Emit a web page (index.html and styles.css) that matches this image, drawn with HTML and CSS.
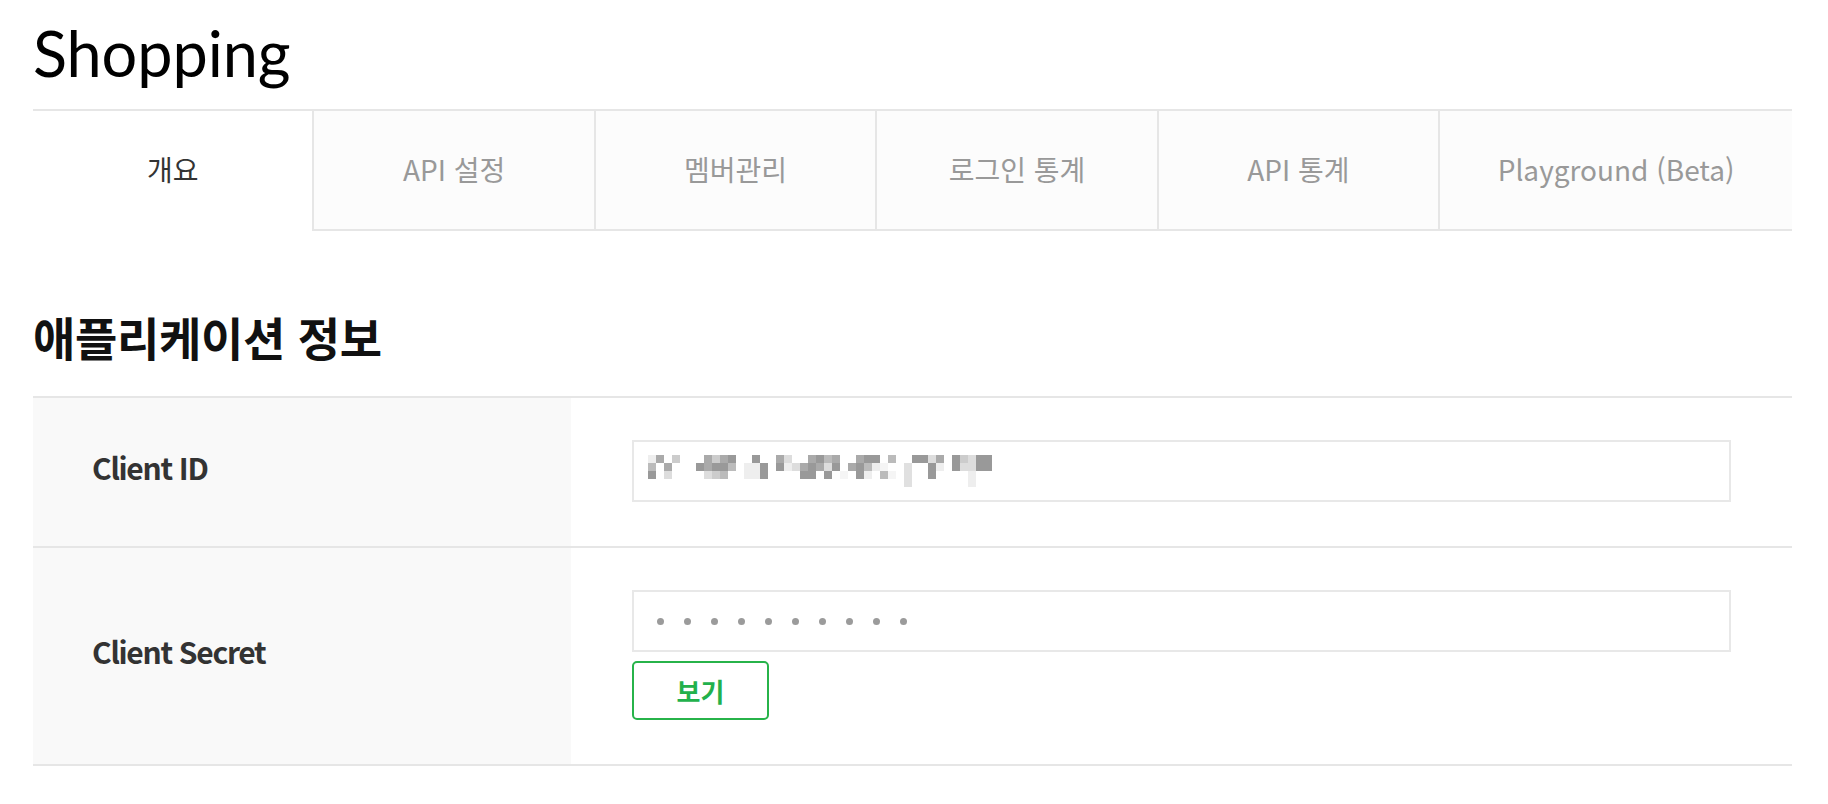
FILE: index.html
```html
<!DOCTYPE html>
<html lang="ko">
<head>
<meta charset="utf-8">
<title>Shopping</title>
<link rel="stylesheet" href="styles.css">
</head>
<body>
<div class="page">
  <h1 class="title">Shopping</h1>
  <ul class="tabs">
    <li class="tab active">개요</li>
    <li class="tab">API 설정</li>
    <li class="tab">멤버관리</li>
    <li class="tab">로그인 통계</li>
    <li class="tab">API 통계</li>
    <li class="tab">Playground (Beta)</li>
  </ul>
  <h2 class="section-title">애플리케이션 정보</h2>
  <div class="info">
    <div class="row">
      <div class="label">Client ID</div>
      <div class="value">
        <div class="field">
          <svg class="mosaic" width="344" height="32" viewBox="0 0 43 4" shape-rendering="crispEdges" aria-hidden="true">
            <path fill="#999" d="M10 0h1v1h-1zM13 0h1v1h-1zM21 0h1v1h-1zM27 0h2v1h-2zM33 0h2v1h-2zM38 0h1v1h-1zM41 0h2v1h-2zM6 1h1v1h-1zM8 1h2v1h-2zM14 1h1v1h-1zM16 1h1v1h-1zM20 1h1v1h-1zM23 1h1v1h-1zM26 1h1v1h-1zM35 1h1v1h-1zM38 1h1v1h-1zM41 1h2v1h-2zM0 2h1v1h-1zM14 2h1v1h-1zM19 2h2v1h-2zM22 2h1v1h-1zM26 2h1v1h-1zM35 2h1v1h-1z"/>
            <path fill="#aaa" d="M1 0h1v1h-1zM7 0h1v1h-1zM9 0h1v1h-1zM16 0h1v1h-1zM20 0h1v1h-1zM23 0h1v1h-1zM26 0h1v1h-1zM36 0h1v1h-1zM2 1h1v1h-1zM7 1h1v1h-1zM19 1h1v1h-1zM21 1h1v1h-1zM25 1h1v1h-1z"/>
            <path fill="#bbb" d="M22 0h1v1h-1zM30 0h1v1h-1zM0 1h1v1h-1zM10 1h1v1h-1zM27 1h1v1h-1zM9 2h1v1h-1zM29 2h1v1h-1z"/>
            <path fill="#ccc" d="M3 0h1v1h-1zM8 0h1v1h-1zM39 0h1v1h-1zM8 2h1v1h-1z"/>
            <path fill="#ddd" d="M17 0h1v1h-1zM35 0h1v1h-1zM40 0h1v1h-1zM18 1h1v1h-1zM22 1h1v1h-1zM39 1h2v1h-2zM2 2h1v1h-1zM7 2h1v1h-1z"/>
            <path fill="#eee" d="M0 0h1v1h-1zM12 1h2v1h-2zM17 1h1v1h-1zM28 1h1v1h-1zM36 1h1v1h-1zM12 2h2v1h-2zM27 2h1v1h-1zM40 2h1v2h-1z"/>
            <path fill="#f5f5f5" d="M29 1h1v1h-1zM24 2h1v1h-1zM30 2h1v1h-1z"/>
            <path fill="#e0e0e0" d="M32 1h1v3h-1z"/>
          </svg>
        </div>
      </div>
    </div>
    <div class="row">
      <div class="label">Client Secret</div>
      <div class="value">
        <div class="field secret">
          <span class="dot"></span><span class="dot"></span><span class="dot"></span><span class="dot"></span><span class="dot"></span><span class="dot"></span><span class="dot"></span><span class="dot"></span><span class="dot"></span><span class="dot"></span>
        </div>
        <button class="btn" type="button">보기</button>
      </div>
    </div>
  </div>
</div>
</body>
</html>
```

FILE: styles.css
```css
html, body {
  margin: 0;
  padding: 0;
  background: #fff;
}

body {
  font-family: "Noto Sans CJK KR", "Noto Sans", sans-serif;
  color: #333;
}

.page {
  padding: 0 36px 0 33px;
}

.title {
  margin: 0 0 4px;
  font-family: Lato, "Noto Sans", sans-serif;
  font-weight: 400;
  font-size: 63px;
  line-height: 105px;
  letter-spacing: -0.1px;
  color: #000;
}

.tabs {
  display: flex;
  margin: 0;
  padding: 0;
  list-style: none;
  border-top: 2px solid #e6e6e6;
}

.tab {
  flex: 0 0 16%;
  box-sizing: border-box;
  height: 120px;
  padding-bottom: 3px;
  display: flex;
  align-items: center;
  justify-content: center;
  background: #fcfcfc;
  border-left: 2px solid #e6e6e6;
  border-bottom: 2px solid #e6e6e6;
  font-size: 28px;
  color: #999;
  white-space: nowrap;
}

.tab:last-child {
  flex: 1 1 auto;
}

.tab.active {
  flex-basis: calc(16% - 2px);
  background: #fff;
  border-left: 0;
  border-bottom-color: transparent;
  color: #333;
}

.section-title {
  margin: 75px 0 30px;
  font-size: 46px;
  line-height: 60px;
  font-weight: 700;
  color: #111;
  letter-spacing: -0.3px;
}

.info {
  border-top: 2px solid #e6e6e6;
}

.row {
  display: flex;
  border-bottom: 2px solid #e6e6e6;
}

.label {
  flex: 0 0 538px;
  box-sizing: border-box;
  padding: 0 0 10px 59px;
  display: flex;
  align-items: center;
  background: #f9f9f9;
  font-size: 30px;
  font-weight: 700;
  color: #333;
  letter-spacing: -1.3px;
}

.value {
  flex: 1 1 auto;
  padding: 42px 61px 44px;
}

.field {
  box-sizing: border-box;
  height: 62px;
  border: 2px solid #e8e8e8;
  background: #fff;
  display: flex;
  align-items: center;
  padding-left: 14px;
}

.mosaic {
  display: block;
}

.field.secret {
  padding-left: 23px;
  gap: 20px;
}

.dot {
  width: 7px;
  height: 7px;
  border-radius: 50%;
  background: #9b9b9b;
}

.btn {
  display: block;
  margin-top: 9px;
  box-sizing: border-box;
  width: 137px;
  height: 59px;
  padding: 0;
  border: 2px solid #27b34a;
  border-radius: 5px;
  background: #fff;
  color: #22b14c;
  font-family: "Noto Sans CJK KR", sans-serif;
  font-size: 26px;
  font-weight: 700;
  cursor: pointer;
}
```
